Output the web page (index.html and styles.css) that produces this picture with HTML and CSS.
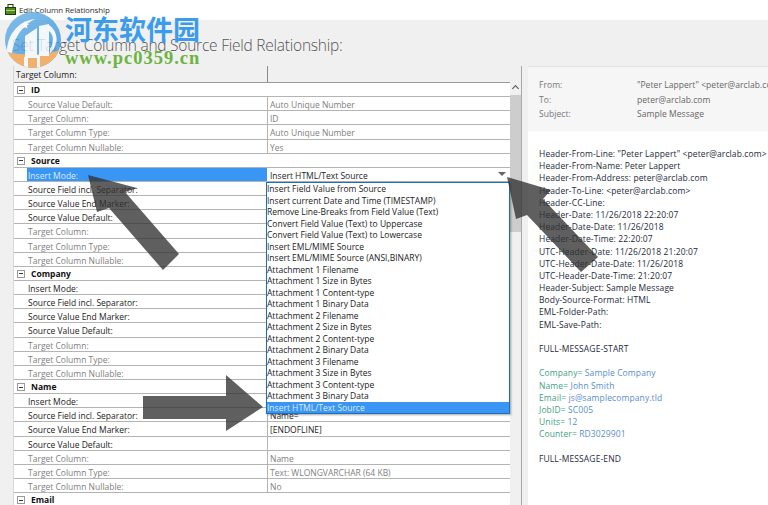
FILE: index.html
```html
<!DOCTYPE html>
<html lang="en">
<head>
<meta charset="utf-8">
<title>Edit Column Relationship</title>
<link rel="stylesheet" href="styles.css">
</head>
<body>
<div class="page">
  <header class="titlebar">
    <svg class="appicon" viewBox="0 0 11 11" width="11" height="11"><rect x="0.5" y="3.5" width="10" height="7" fill="#4f8a1e" stroke="#1e3b0a"/><rect x="3" y="0.5" width="5" height="3" fill="none" stroke="#1e3b0a"/><rect x="1" y="6" width="9" height="1" fill="#b5d96a"/></svg>
    <span>Edit Column Relationship</span>
  </header>
  <h1 class="heading">Set Target Column and Source Field Relationship:</h1>
  <main class="content">
    <section class="gridwrap">
      <div class="grid">
        <div class="row head"><div class="left">Target Column:</div><div class="right"></div></div>
        <div class="row group"><div class="toggle"></div><div>ID</div></div>
        <div class="row dim"><div class="left">Source Value Default:</div><div class="right">Auto Unique Number</div></div>
        <div class="row dim"><div class="left">Target Column:</div><div class="right">ID</div></div>
        <div class="row dim"><div class="left">Target Column Type:</div><div class="right">Auto Unique Number</div></div>
        <div class="row dim"><div class="left">Target Column Nullable:</div><div class="right">Yes</div></div>
        <div class="row group"><div class="toggle"></div><div>Source</div></div>
        <div class="row sel"><div class="left">Insert Mode:</div><div class="right">Insert HTML/Text Source<span class="caret"></span></div></div>
        <div class="row"><div class="left">Source Field incl. Separator:</div><div class="right"></div></div>
        <div class="row"><div class="left">Source Value End Marker:</div><div class="right"></div></div>
        <div class="row"><div class="left">Source Value Default:</div><div class="right"></div></div>
        <div class="row dim"><div class="left">Target Column:</div><div class="right"></div></div>
        <div class="row dim"><div class="left">Target Column Type:</div><div class="right"></div></div>
        <div class="row dim"><div class="left">Target Column Nullable:</div><div class="right"></div></div>
        <div class="row group"><div class="toggle"></div><div>Company</div></div>
        <div class="row"><div class="left">Insert Mode:</div><div class="right"></div></div>
        <div class="row"><div class="left">Source Field incl. Separator:</div><div class="right"></div></div>
        <div class="row"><div class="left">Source Value End Marker:</div><div class="right"></div></div>
        <div class="row"><div class="left">Source Value Default:</div><div class="right"></div></div>
        <div class="row dim"><div class="left">Target Column:</div><div class="right"></div></div>
        <div class="row dim"><div class="left">Target Column Type:</div><div class="right"></div></div>
        <div class="row dim"><div class="left">Target Column Nullable:</div><div class="right"></div></div>
        <div class="row group"><div class="toggle"></div><div>Name</div></div>
        <div class="row"><div class="left">Insert Mode:</div><div class="right"></div></div>
        <div class="row"><div class="left">Source Field incl. Separator:</div><div class="right">Name=</div></div>
        <div class="row"><div class="left">Source Value End Marker:</div><div class="right">[ENDOFLINE]</div></div>
        <div class="row"><div class="left">Source Value Default:</div><div class="right"></div></div>
        <div class="row dim"><div class="left">Target Column:</div><div class="right">Name</div></div>
        <div class="row dim"><div class="left">Target Column Type:</div><div class="right">Text: WLONGVARCHAR (64 KB)</div></div>
        <div class="row dim"><div class="left">Target Column Nullable:</div><div class="right">No</div></div>
        <div class="row group"><div class="toggle"></div><div>Email</div></div>
      </div>
      <div class="scrollbar"><div class="scrollup"></div><div class="thumb"></div></div>
    </section>
    <section class="message">
      <div class="msghead">
        <div class="msgrow"><span class="msglabel">From:</span><span>"Peter Lappert" &lt;peter@arclab.com&gt;</span></div>
        <div class="msgrow"><span class="msglabel">To:</span><span>peter@arclab.com</span></div>
        <div class="msgrow"><span class="msglabel">Subject:</span><span>Sample Message</span></div>
      </div>
      <div class="msgbody">
        <p>Header-From-Line: "Peter Lappert" &lt;peter@arclab.com&gt;</p>
        <p>Header-From-Name: Peter Lappert</p>
        <p>Header-From-Address: peter@arclab.com</p>
        <p>Header-To-Line: &lt;peter@arclab.com&gt;</p>
        <p>Header-CC-Line:</p>
        <p>Header-Date: 11/26/2018 22:20:07</p>
        <p>Header-Date-Date: 11/26/2018</p>
        <p>Header-Date-Time: 22:20:07</p>
        <p>UTC-Header-Date: 11/26/2018 21:20:07</p>
        <p>UTC-Header-Date-Date: 11/26/2018</p>
        <p>UTC-Header-Date-Time: 21:20:07</p>
        <p>Header-Subject: Sample Message</p>
        <p>Body-Source-Format: HTML</p>
        <p>EML-Folder-Path:</p>
        <p>EML-Save-Path:</p>
        <p class="blank"></p>
        <p>FULL-MESSAGE-START</p>
        <p class="blank"></p>
        <p class="field"><b>Company=</b> Sample Company</p>
        <p class="field"><b>Name=</b> John Smith</p>
        <p class="field"><b>Email=</b> js@samplecompany.tld</p>
        <p class="field"><b>JobID=</b> SC005</p>
        <p class="field"><b>Units=</b> 12</p>
        <p class="field"><b>Counter=</b> RD3029901</p>
        <p class="blank"></p>
        <p>FULL-MESSAGE-END</p>
      </div>
    </section>
  </main>
  <ul class="dropdown">
    <li>Insert Field Value from Source</li>
    <li>Insert current Date and Time (TIMESTAMP)</li>
    <li>Remove Line-Breaks from Field Value (Text)</li>
    <li>Convert Field Value (Text) to Uppercase</li>
    <li>Convert Field Value (Text) to Lowercase</li>
    <li>Insert EML/MIME Source</li>
    <li>Insert EML/MIME Source (ANSI,BINARY)</li>
    <li>Attachment 1 Filename</li>
    <li>Attachment 1 Size in Bytes</li>
    <li>Attachment 1 Content-type</li>
    <li>Attachment 1 Binary Data</li>
    <li>Attachment 2 Filename</li>
    <li>Attachment 2 Size in Bytes</li>
    <li>Attachment 2 Content-type</li>
    <li>Attachment 2 Binary Data</li>
    <li>Attachment 3 Filename</li>
    <li>Attachment 3 Size in Bytes</li>
    <li>Attachment 3 Content-type</li>
    <li>Attachment 3 Binary Data</li>
    <li class="picked">Insert HTML/Text Source</li>
  </ul>
  <svg class="arrows" viewBox="0 0 768 505" width="768" height="505">
    <polygon points="88,175 137,188 125,192 179,254 163,270 109,208 97,212"/>
    <polygon points="507,177 551,190 543,199 598,257 581,272 527,215 516,219"/>
    <polygon points="143,396 226,396 226,375 263,407 226,431 226,419 143,419"/>
  </svg>
  <div class="watermark">
    <svg class="wmlogo" viewBox="0 0 60 58" width="60" height="58">
      <defs>
        <clipPath id="disc"><circle cx="29" cy="29" r="28"/></clipPath>
        <linearGradient id="sky" x1="0" y1="0" x2="1" y2="1"><stop offset="0" stop-color="#67b2e6"/><stop offset="1" stop-color="#2f8fdc"/></linearGradient>
      </defs>
      <g clip-path="url(#disc)">
        <rect width="60" height="58" fill="url(#sky)"/>
        <path d="M0 40 C 8 44 50 46 60 36 V58 H0z" fill="#f2a24c"/>
        <path d="M3 41 C 3 24 14 10 31 8 C 19 14 10 26 8 42z" fill="#f4f9fd"/>
        <path d="M21 25 L33 17 V47 H21z" fill="#f4f9fd"/>
        <path d="M35 15 L45 13 V45 H35z" fill="#f4f9fd"/>
        <path d="M45 14 C 54 20 56 34 46 42 V38 C 50 32 50 24 45 20z" fill="#f4f9fd"/>
        <rect x="20" y="46" width="4" height="12" fill="#f4f9fd"/>
        <rect x="33" y="44" width="3" height="14" fill="#f4f9fd"/>
      </g>
      <path d="M21 10 l1.2 2.6 2.8.3-2.1 1.9.6 2.8-2.5-1.4-2.5 1.4.6-2.8-2.1-1.9 2.8-.3z" fill="#fff"/>
    </svg>
    <div class="wmtext">
      <div class="wmcn">河东软件园</div>
      <div class="wmurl">www.pc0359.cn</div>
    </div>
  </div>
</div>
</body>
</html>
```
FILE: styles.css
```css
* { box-sizing: border-box; }
html, body { margin: 0; padding: 0; }
body { font-family: "Open Sans", "Liberation Sans", sans-serif; font-size: 8.5px; color: #222; }
.page { position: relative; width: 768px; height: 505px; overflow: hidden; background: #f0f0f0; display: flex; flex-direction: column; }

.titlebar { height: 20px; background: #fff; display: flex; align-items: center; gap: 3px; padding: 0 0 2px 5px; color: #333; font-size: 8px; letter-spacing: -.12px; flex: none; }
.appicon { flex: none; }

.heading { margin: 0; height: 46px; padding: 12px 0 0 12px; font-size: 15.5px; font-weight: 300; letter-spacing: -.23px; line-height: 26px; color: #555; flex: none; }

.content { display: flex; flex: 1; min-height: 0; }
.gridwrap { display: flex; width: 509px; margin-left: 13px; border-right: 1px solid #a8a8a8; flex: none; }
.grid { width: 497px; flex: none; border-left: 1px solid #d8d8d8; overflow: hidden; }

.row { display: flex; height: 14.15px; line-height: 15px; border-bottom: 1px solid #b4b4b4; background: #fff; white-space: nowrap; }
.row .left { width: 253px; padding-left: 14px; flex: none; }
.row .right { flex: 1; min-width: 0; padding-left: 2px; border-left: 1px solid #b4b4b4; position: relative; }
.head { height: 17px; background: #f0f0f0; line-height: 17px; border-bottom: 1px solid #9a9a9a; }
.head .left { padding-left: 2px; }
.head .right { border-left: 1px solid #8a8a8a; }
.group { font-weight: 700; color: #111; align-items: center; line-height: 14px; padding-top: 1px; }
.toggle { width: 14px; flex: none; margin-left: 3px; position: relative; }
.toggle::before { content: ""; display: block; width: 6px; height: 6px; border: 1px solid #999; background: linear-gradient(#333, #333) center / 4px 1px no-repeat #fff; }
.dim { color: #808080; }
.sel .left { background: #3a96f5; color: #dcecff; margin-left: 13px; padding-left: 1px; width: 240px; }
.sel .right { border-left: 0; padding-left: 3px; }
.caret { position: absolute; right: 4px; top: 4px; border: 4px solid transparent; border-top: 4px solid #666; border-bottom: 0; }

.scrollbar { flex: 1; background: #f0f0f0; position: relative; }
.scrollup { height: 12px; margin-top: 17px; position: relative; }
.scrollup::before { content: ""; position: absolute; left: 3px; top: 3px; width: 4px; height: 4px; border-left: 1px solid #555; border-top: 1px solid #555; transform: rotate(45deg); }
.thumb { height: 137px; background: #cdcdcd; margin-top: 0; }

.message { margin-left: 6px; flex: 1; min-width: 0; background: #fff; border-top: 1px solid #e2e2e2; overflow: hidden; white-space: nowrap; }
.msghead { height: 64px; background: #f6f6f6; padding: 11px 0 0 11px; color: #666; letter-spacing: .06px; }
.msgrow { display: flex; height: 14.7px; line-height: 14.7px; }
.msglabel { width: 98px; flex: none; color: #777; }
.msgbody { padding: 17px 0 0 11px; color: #1c2a3a; letter-spacing: .11px; }
.msgbody p { margin: 0; height: 12.2px; line-height: 12.2px; }
.msgbody .field { color: #5a8ecb; }
.msgbody .field b { font-weight: 400; color: #3f9f86; }

.dropdown { position: absolute; left: 266px; top: 182px; width: 244px; height: 232px; margin: 0; padding: 0; list-style: none; background: #fff; border: 1px solid #1f6fb5; box-shadow: 1px 1px 2px rgba(0,0,0,.35); color: #222; }
.dropdown li { height: 11.5px; line-height: 11.5px; padding-left: 0; white-space: nowrap; }
.dropdown .picked { background: #3a96f5; color: #dcecff; }

.arrows { position: absolute; left: 0; top: 0; pointer-events: none; }
.arrows polygon { fill: rgba(50,50,50,.78); }

.watermark { position: absolute; left: 4px; top: 11px; display: flex; gap: 1px; pointer-events: none; }
.wmlogo { flex: none; opacity: .8; }
.wmtext { width: 140px; }
.wmcn { font-family: "Noto Sans CJK SC", sans-serif; font-size: 27px; font-weight: 700; line-height: 30px; color: #3b9cec; margin-top: 3px; white-space: nowrap; }
.wmurl { font-family: "Liberation Serif", serif; font-size: 18.5px; font-weight: 700; line-height: 16px; margin-top: 6px; color: #6cb33f; letter-spacing: 1px; white-space: nowrap; }
```
